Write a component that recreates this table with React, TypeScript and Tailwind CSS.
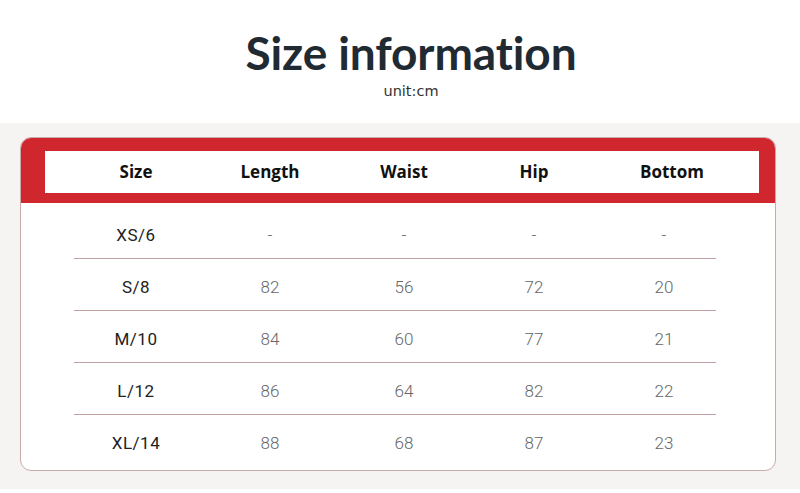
import React from 'react';

const rows = [
  { size: 'XS/6', values: ['-', '-', '-', '-'] },
  { size: 'S/8', values: ['82', '56', '72', '20'] },
  { size: 'M/10', values: ['84', '60', '77', '21'] },
  { size: 'L/12', values: ['86', '64', '82', '22'] },
  { size: 'XL/14', values: ['88', '68', '87', '23'] },
];

const headers = ['Size', 'Length', 'Waist', 'Hip', 'Bottom'];
const headerWidths = ['w-[124px]', 'w-[144px]', 'w-[124px]', 'w-[136px]', 'w-[140px]'];
const cellWidths = ['w-[124px]', 'w-[144px]', 'w-[124px]', 'w-[136px]', 'w-[124px]'];

const App: React.FC = () => {
  return (
    <div className="w-[800px] h-[493px] bg-white overflow-hidden">
      {/* --- Title --- */}
      <div className="h-[123px] flex flex-col items-center pl-[22px] pt-[27px]">
        <h1 className="text-[46px] leading-[52px] font-bold text-[#1f2a33] tracking-[-0.1px] [font-family:'Lato',sans-serif]">
          Size information
        </h1>
        <p className="mt-[3px] text-[14.5px] leading-[18px] text-[#333] [font-family:'DejaVu_Sans',sans-serif]">unit:cm</p>
      </div>

      {/* --- Table area --- */}
      <div className="h-[366px] bg-[#f6f4f2] pt-[14px] pl-[20px]">
        <div className="w-[756px] h-[334px] bg-white border border-[#c9abab] rounded-[11px] overflow-hidden">
          <div className="bg-[#d0262e] pt-[13px] pb-[10px] pl-[24px] pr-[16px]">
            <div className="h-[42px] bg-white flex items-center pl-[29px] [font-family:'Open_Sans',sans-serif]">
              {headers.map((h, i) => (
                <div key={h} className={`${headerWidths[i]} shrink-0 text-center text-[17px] font-bold text-[#111]`}>
                  {h}
                </div>
              ))}
            </div>
          </div>

          <div className="ml-[53px] w-[642px] pt-[3px] [font-family:'Roboto',sans-serif]">
            {rows.map((r, idx) => (
              <div
                key={r.size}
                className={`${idx === 0 ? 'h-[53px] pt-[8px]' : 'h-[52px] pt-[6px]'} flex items-center ${idx < rows.length - 1 ? 'border-b border-[#c2a1a5]' : ''}`}
              >
                <div className={`${cellWidths[0]} shrink-0 text-center text-[17px] text-[#222] tracking-[0.5px]`}>{r.size}</div>
                {r.values.map((v, i) => (
                  <div key={i} className={`${cellWidths[i + 1]} shrink-0 text-center text-[17px] font-light text-[#666]`}>
                    {v}
                  </div>
                ))}
              </div>
            ))}
          </div>
        </div>
      </div>
    </div>
  );
};

export default App;
